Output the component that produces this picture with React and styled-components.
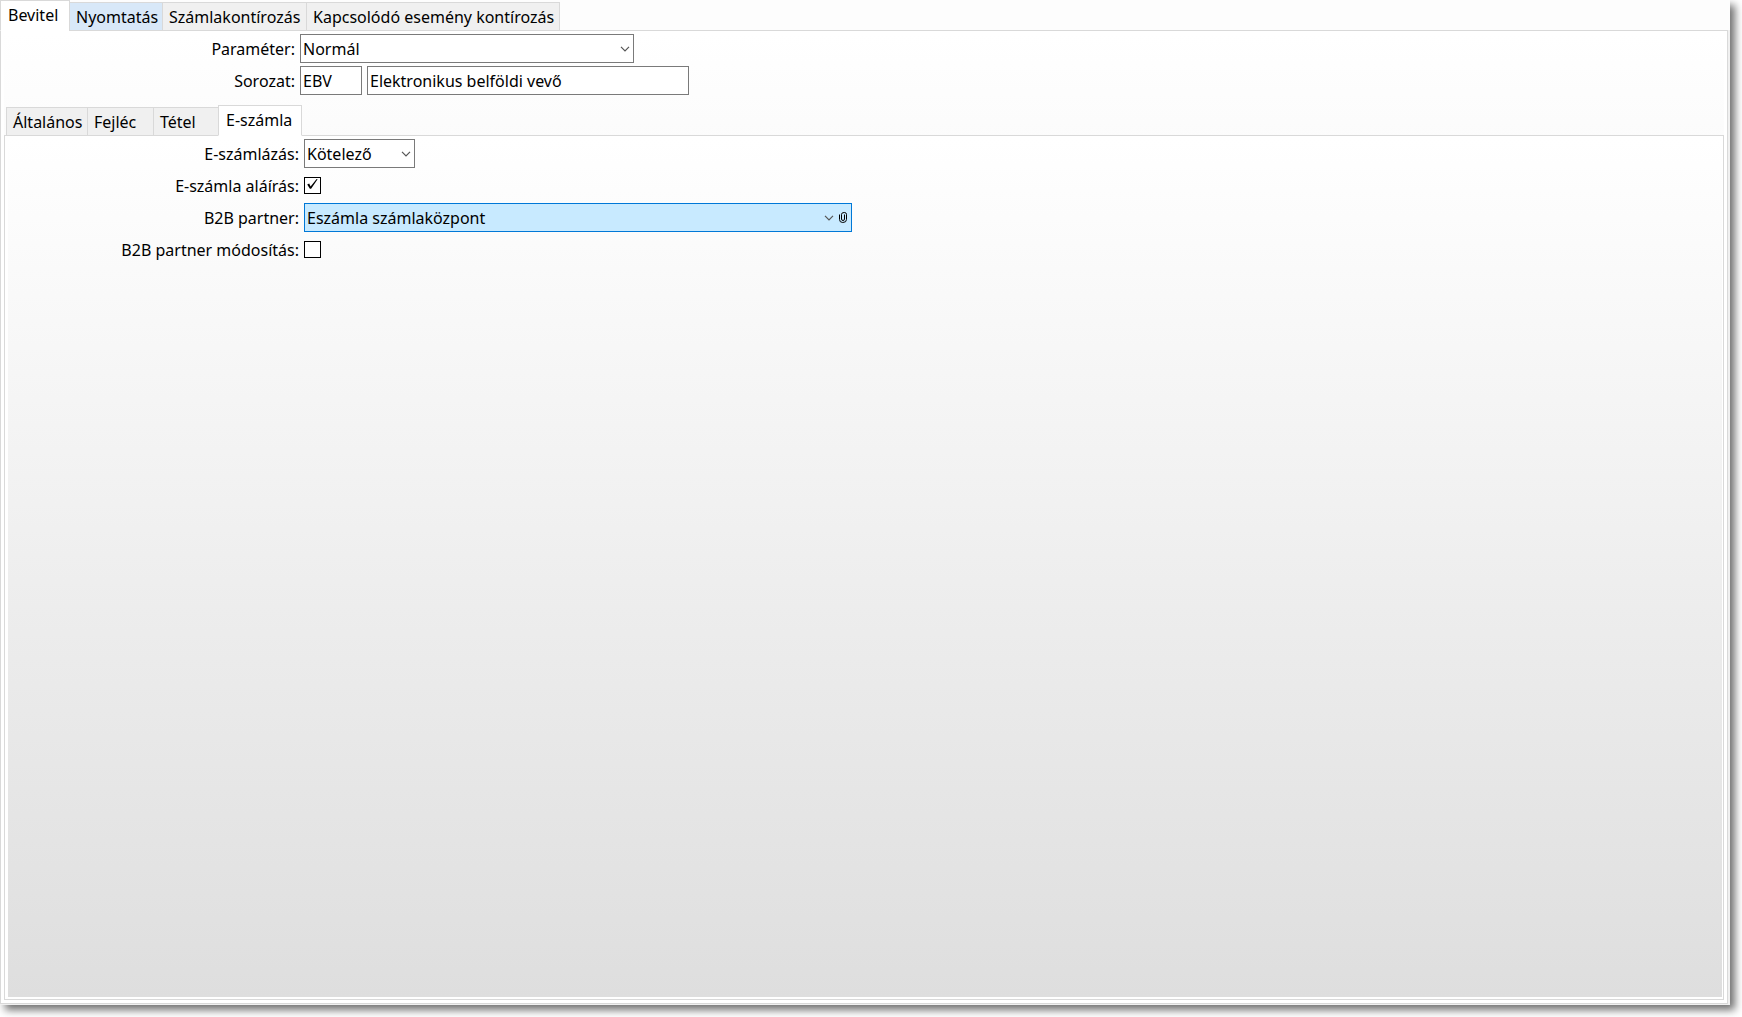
import React, { useState } from 'react'
import styled, { createGlobalStyle } from 'styled-components'

const MAIN_TABS = [
  { id: 'bevitel', label: 'Bevitel', width: 70 },
  { id: 'nyomtatas', label: 'Nyomtatás', width: 94, hot: true },
  { id: 'szamla', label: 'Számlakontírozás', width: 145 },
  { id: 'kapcs', label: 'Kapcsolódó esemény kontírozás', width: 254 }
]

const SUB_TABS = [
  { id: 'altalanos', label: 'Általános', width: 82 },
  { id: 'fejlec', label: 'Fejléc', width: 67 },
  { id: 'tetel', label: 'Tétel', width: 66 },
  { id: 'eszamla', label: 'E-számla', width: 84 }
]

const Chevron = ({ clip }) => (
  <ChevronIcon $clip={clip} viewBox="0 0 10 6" aria-hidden="true">
    <path d="M1 0.8 L5 4.8 L9 0.8" fill="none" stroke="#555" strokeWidth="1.2" />
  </ChevronIcon>
)

const CheckField = ({ id, defaultChecked }) => (
  <CheckBox>
    <input id={id} type="checkbox" defaultChecked={defaultChecked} />
    <svg viewBox="0 0 15 15" aria-hidden="true">
      <path d="M2.2 6.4 L4.2 5.6 L5.6 8.4 L11.6 1 L12.6 1.2 L6.1 10.8 L4.9 10.8 Z" fill="#000" />
    </svg>
  </CheckBox>
)

const Tabs = ({ items, active, onSelect, inset }) => (
  <TabBar role="tablist" $inset={inset}>
    {items.map((tab) => (
      <Tab
        key={tab.id}
        type="button"
        role="tab"
        aria-selected={tab.id === active}
        $active={tab.id === active}
        $hot={tab.hot}
        $width={tab.width}
        onClick={() => onSelect(tab.id)}
      >
        {tab.label}
      </Tab>
    ))}
  </TabBar>
)

const App = () => {
  const [mainTab, setMainTab] = useState('bevitel')
  const [subTab, setSubTab] = useState('eszamla')

  return (
    <Page>
      <GlobalStyle />
      <Window>
        <Tabs items={MAIN_TABS} active={mainTab} onSelect={setMainTab} />
        <OuterPanel>
          <Form>
            <Row>
              <Label htmlFor="parameter">Paraméter:</Label>
              <Field $width={334}>
                <Select id="parameter" defaultValue="Normál">
                  <option>Normál</option>
                </Select>
                <Chevron />
              </Field>
            </Row>
            <Row>
              <Label htmlFor="sorozat">Sorozat:</Label>
              <Field $width={62}>
                <Input id="sorozat" defaultValue="EBV" />
              </Field>
              <Field $width={322}>
                <Input aria-label="Sorozat neve" defaultValue="Elektronikus belföldi vevő" />
              </Field>
            </Row>
          </Form>

          <Tabs items={SUB_TABS} active={subTab} onSelect={setSubTab} inset />
          <InnerPanel>
            <Form>
              <Row>
                <Label htmlFor="eszamlazas">E-számlázás:</Label>
                <Field $width={111}>
                  <Select id="eszamlazas" defaultValue="Kötelező">
                    <option>Kötelező</option>
                  </Select>
                  <Chevron />
                </Field>
              </Row>
              <Row>
                <Label htmlFor="alairas">E-számla aláírás:</Label>
                <CheckField id="alairas" defaultChecked />
              </Row>
              <Row>
                <Label htmlFor="partner">B2B partner:</Label>
                <Field $width={548} $focused>
                  <Select id="partner" defaultValue="Eszámla számlaközpont">
                    <option>Eszámla számlaközpont</option>
                  </Select>
                  <Chevron clip />
                  <ClipButton type="button" aria-label="Csatolás">
                    <svg viewBox="0 0 10 13" width="10" height="13">
                      <path
                        d="M1.5 3.5 V8.5 Q1.5 11.5 4.8 11.5 Q8.5 11.5 8.5 8.5 V3.3 Q8.5 1.5 6.3 1.5 Q3.5 1.5 3.5 3.3 V8 Q3.5 9.5 5 9.5 Q6.5 9.5 6.5 8 V3.5"
                        fill="none"
                        stroke="#000"
                        strokeWidth="1"
                      />
                    </svg>
                  </ClipButton>
                </Field>
              </Row>
              <Row>
                <Label htmlFor="modositas">B2B partner módosítás:</Label>
                <CheckField id="modositas" />
              </Row>
            </Form>
          </InnerPanel>
        </OuterPanel>
      </Window>
    </Page>
  )
}

export default App

// Styled Components
const GlobalStyle = createGlobalStyle`
  * {
    box-sizing: border-box;
  }

  body {
    margin: 0;
    background: #fff;
  }

  body, button, input, select {
    font-family: 'Noto Sans', 'Open Sans', sans-serif;
    font-size: 16px;
    color: #000;
  }
`

const Page = styled.div`
  display: flex;
  min-height: 100vh;
  padding: 0 12px 12px 0;
  overflow: hidden;
`

const Window = styled.div`
  flex: 1;
  display: flex;
  flex-direction: column;
  padding: 0 2px 1px 0;
  background: linear-gradient(180deg, #fdfdfd 0, #fdfdfd 30px, #f0f0f0 30px);
  box-shadow: 5px 5px 8px rgba(0, 0, 0, 0.56);
`

const TabBar = styled.div`
  display: flex;
  align-items: flex-end;
  height: 31px;
  margin-bottom: -1px;
  padding-left: ${({ $inset }) => ($inset ? '2px' : '0')};
  position: relative;
`

const Tab = styled.button`
  width: ${({ $width }) => $width}px;
  height: ${({ $active }) => ($active ? '31px' : '29px')};
  margin-right: -1px;
  padding: ${({ $active }) => ($active ? '0 0 2px 7px' : '0 0 0 6px')};
  border: 1px solid #d9d9d9;
  border-bottom-color: ${({ $active }) => ($active ? '#fff' : '#d9d9d9')};
  background: ${({ $active, $hot }) => ($active ? '#fff' : $hot ? '#d8e8f8' : '#f0f0f0')};
  line-height: 24px;
  text-align: left;
  white-space: nowrap;
`

const OuterPanel = styled.div`
  flex: 1;
  display: flex;
  flex-direction: column;
  padding: 3px;
  border: 1px solid #d9d9d9;
  background: linear-gradient(180deg, #fff, #dedede) content-box, #fff;
`

const InnerPanel = styled.div`
  flex: 1;
  padding: 3px 1px 2px 3px;
  border: 1px solid #d9d9d9;
  background: linear-gradient(180deg, #fff, #dedede) content-box, #fff;
`

const Form = styled.div`
  display: flex;
  flex-direction: column;
  gap: 3px;
  padding-bottom: 10px;
`

const Row = styled.div`
  display: flex;
  align-items: center;
  gap: 5px;
  height: 29px;
`

const Label = styled.label`
  width: 291px;
  text-align: right;
  line-height: 24px;
`

const Field = styled.div`
  position: relative;
  width: ${({ $width }) => $width}px;
  height: 29px;
  border: 1px solid ${({ $focused }) => ($focused ? '#0078d7' : '#7a7a7a')};
  background: ${({ $focused }) => ($focused ? '#c8eaff' : '#fff')};
`

const Input = styled.input`
  width: 100%;
  height: 100%;
  padding: 0 2px;
  border: 0;
  outline: 0;
  background: transparent;
`

const Select = styled.select`
  width: 100%;
  height: 100%;
  padding: 0 2px;
  border: 0;
  outline: 0;
  appearance: none;
  background: transparent;
`

const ChevronIcon = styled.svg`
  position: absolute;
  top: 11px;
  right: ${({ $clip }) => ($clip ? '17px' : '3px')};
  width: 10px;
  height: 6px;
  pointer-events: none;
`

const ClipButton = styled.button`
  position: absolute;
  top: 7px;
  right: 3px;
  display: flex;
  padding: 0;
  border: 0;
  background: transparent;
`

const CheckBox = styled.span`
  position: relative;
  display: flex;
  width: 17px;
  height: 17px;

  input {
    width: 17px;
    height: 17px;
    margin: 0;
    border: 1px solid #000;
    background: #fff;
    appearance: none;
  }

  svg {
    position: absolute;
    inset: 1px;
    display: none;
    pointer-events: none;
  }

  input:checked + svg {
    display: block;
  }
`
